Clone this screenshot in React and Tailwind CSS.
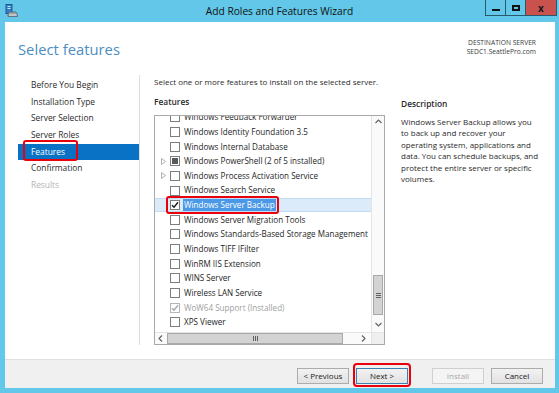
import { useState } from 'react';

const navItems = [
  { label: 'Before You Begin' },
  { label: 'Installation Type' },
  { label: 'Server Selection' },
  { label: 'Server Roles' },
  { label: 'Features', active: true },
  { label: 'Confirmation' },
  { label: 'Results', disabled: true },
];

const features = [
  { label: 'Windows Feedback Forwarder' },
  { label: 'Windows Identity Foundation 3.5' },
  { label: 'Windows Internal Database' },
  { label: 'Windows PowerShell (2 of 5 installed)', state: 'partial', expandable: true },
  { label: 'Windows Process Activation Service', expandable: true },
  { label: 'Windows Search Service' },
  { label: 'Windows Server Backup', state: 'checked', selected: true },
  { label: 'Windows Server Migration Tools' },
  { label: 'Windows Standards-Based Storage Management' },
  { label: 'Windows TIFF IFilter' },
  { label: 'WinRM IIS Extension' },
  { label: 'WINS Server' },
  { label: 'Wireless LAN Service' },
  { label: 'WoW64 Support (Installed)', state: 'checked', disabled: true },
  { label: 'XPS Viewer' },
];

function AppIcon() {
  return (
    <svg width="13" height="13" viewBox="0 0 13 13">
      <rect x="1" y="0.5" width="6" height="9" fill="#2f7fc4" stroke="#1c5a94" />
      <rect x="2.5" y="2" width="3" height="1" fill="#cfe6fa" />
      <rect x="2.5" y="4" width="3" height="1" fill="#cfe6fa" />
      <path d="M4 8 L11 8 L12.5 11 L12.5 12.5 L3 12.5 L3 11 Z" fill="#9aa3ab" stroke="#5d666e" strokeWidth="0.8" />
      <rect x="4" y="10.5" width="7.5" height="1" fill="#e4e7ea" />
    </svg>
  );
}

function Checkbox({ state, disabled }) {
  const border = disabled ? 'border-[#b5b5b5]' : 'border-[#7d7d7d]';
  return (
    <span className={`w-[10px] h-[10px] shrink-0 border ${border} bg-white flex items-center justify-center`}>
      {state === 'checked' && (
        <svg width="8" height="8" viewBox="0 0 8 8">
          <path d="M1 4.2 L3 6.3 L7 1.2" stroke={disabled ? '#a8a8a8' : '#1a1a1a'} strokeWidth="1.4" fill="none" />
        </svg>
      )}
      {state === 'partial' && <span className="w-[6px] h-[6px] bg-[#5a5a5a]" />}
    </span>
  );
}

function FeatureRow({ item }) {
  return (
    <div
      className={`h-[14.65px] flex items-center shrink-0 ${
        item.selected ? 'bg-[#dcebfa] border-y border-[#c3dcf5]' : ''
      }`}
    >
      <span className="w-[15px] pl-[1px] flex items-center justify-center shrink-0">
        {item.expandable && (
          <svg width="5" height="7" viewBox="0 0 5 7">
            <path d="M0.5 0.5 L4.5 3.5 L0.5 6.5 Z" fill="none" stroke="#a5a5a5" strokeWidth="0.9" />
          </svg>
        )}
      </span>
      <span className="relative flex items-center gap-[4px]">
        <Checkbox state={item.state} disabled={item.disabled} />
        <span
          className={`whitespace-nowrap ${
            item.disabled ? 'text-[#a0a0a0]' : 'text-[#1e1e1e]'
          } ${item.selected ? 'bg-[#4a98e6] text-white px-[1px] -ml-[1px]' : ''}`}
        >
          {item.label}
        </span>
        {item.selected && (
          <span className="absolute -left-[4px] -right-[3px] -top-[3px] -bottom-[3px] border-[2.5px] border-[#e8000b] rounded-[3px]" />
        )}
      </span>
    </div>
  );
}

function ArrowBtn({ dir }) {
  const paths = {
    up: 'M1.5 5 L4.5 2 L7.5 5',
    down: 'M1.5 2 L4.5 5 L7.5 2',
    left: 'M5 1.5 L2 4.5 L5 7.5',
    right: 'M2 1.5 L5 4.5 L2 7.5',
  };
  return (
    <svg width="9" height="9" viewBox="0 0 9 9">
      <path d={paths[dir]} fill="none" stroke="#606060" strokeWidth="1.1" />
    </svg>
  );
}

function WizardButton({ children, primary, disabled }) {
  return (
    <button
      type="button"
      disabled={disabled}
      className={`w-[52px] h-[16px] text-[8px] leading-none border bg-gradient-to-b ${
        primary ? 'border-[#3c7fb1]' : disabled ? 'border-[#cfcfcf]' : 'border-[#acacac]'
      } ${disabled ? 'text-[#a8a8a8] from-[#f4f4f4] to-[#f4f4f4]' : 'text-[#1a1a1a] from-[#f2f2f2] to-[#e2e2e2]'}`}
    >
      {children}
    </button>
  );
}

export default function App() {
  const [items] = useState(features);

  return (
    <div className="w-[559px] h-[393px] bg-[#62c7e8] flex flex-col font-['Open_Sans',sans-serif] overflow-hidden">
      {/* title bar */}
      <div className="h-[22px] shrink-0 grid grid-cols-[1fr_auto_1fr] items-start">
        <div className="pl-[5px] pt-[4px]">
          <AppIcon />
        </div>
        <div className="pt-[4px] text-[10.2px] leading-[14px] text-[#111]">Add Roles and Features Wizard</div>
        <div className="flex justify-end pr-[2px]">
          <div className="flex border border-t-0 border-[#27596f] h-[16px]">
            <div className="w-[20px] flex items-end justify-center pb-[4px] border-r border-[#27596f]">
              <span className="w-[8px] h-[2px] bg-[#111]" />
            </div>
            <div className="w-[20px] flex items-center justify-center border-r border-[#27596f]">
              <span className="w-[8px] h-[6px] border-2 border-[#111]" />
            </div>
            <div className="w-[30px] bg-[#c9524f] flex items-center justify-center text-[#1a1a1a] text-[10px] font-bold leading-none">
              x
            </div>
          </div>
        </div>
      </div>

      {/* body */}
      <div className="flex-1 mr-[4px] ml-[5px] bg-white flex flex-col">
        <div className="h-[53px] shrink-0 flex justify-between items-start">
          <div className="pl-[13px] pt-[17px] text-[14.8px] leading-[20px] text-[#4c8ec2]">Select features</div>
          <div className="pr-[19px] pt-[16px] text-right text-[6.7px] leading-[9px] text-[#3a3a3a]">
            <div>DESTINATION SERVER</div>
            <div>SEDC1.SeattlePro.com</div>
          </div>
        </div>

        <div className="flex-1 flex min-h-0">
          {/* nav */}
          <div className="w-[134px] shrink-0 pl-[13px] pt-[2px]">
            {navItems.map((n) => (
              <div
                key={n.label}
                className={`relative h-[16.7px] pl-[13px] flex items-center text-[8.4px] ${
                  n.active ? 'bg-[#0a72c4] text-white' : n.disabled ? 'text-[#b4b4b4]' : 'text-[#2a2a2a]'
                }`}
              >
                {n.label}
                {n.active && (
                  <span className="absolute left-[5px] w-[55px] -top-[4px] h-[21px] border-[2.5px] border-[#e8000b] rounded-[3px]" />
                )}
              </div>
            ))}
          </div>

          <div className="w-px h-[270px] bg-[#dedede] shrink-0" />

          {/* content */}
          <div className="flex-1 pl-[14px] pt-[1px] flex flex-col">
            <div className="text-[8px] leading-[12px] text-[#2a2a2a]">
              Select one or more features to install on the selected server.
            </div>
            <div className="flex gap-[16px] mt-[8px]">
              <div className="w-[231px] shrink-0 flex flex-col">
                <div className="text-[8.4px] leading-[12px] font-semibold text-[#2a2a2a] mb-[7px]">Features</div>
                <div className="w-[231px] h-[230px] border border-[#a9a9a9] flex flex-col text-[8.1px]">
                  <div className="flex-1 flex min-h-0">
                    <div className="flex-1 overflow-hidden">
                      <div className="-mt-[6px] flex flex-col">
                        {items.map((it) => (
                          <FeatureRow key={it.label} item={it} />
                        ))}
                      </div>
                    </div>
                    <div className="w-[13px] shrink-0 border-l border-[#e4e4e4] bg-[#fafafa] flex flex-col">
                      <div className="h-[13px] flex items-center justify-center">
                        <ArrowBtn dir="up" />
                      </div>
                      <div className="flex-1 flex flex-col justify-end pb-[4px] px-px">
                        <div className="h-[40px] bg-[#d3d3d3] border border-[#a8a8a8] flex flex-col items-center justify-center gap-px">
                          <span className="w-[5px] h-px bg-[#606060]" />
                          <span className="w-[5px] h-px bg-[#606060]" />
                          <span className="w-[5px] h-px bg-[#606060]" />
                        </div>
                      </div>
                      <div className="h-[13px] flex items-center justify-center">
                        <ArrowBtn dir="down" />
                      </div>
                    </div>
                  </div>
                  <div className="h-[12px] shrink-0 flex border-t border-[#e4e4e4] bg-[#fafafa]">
                    <div className="w-[12px] flex items-center justify-center">
                      <ArrowBtn dir="left" />
                    </div>
                    <div className="w-[176px] bg-[#d3d3d3] border border-[#a8a8a8] flex items-center justify-center gap-px">
                      <span className="w-px h-[5px] bg-[#606060]" />
                      <span className="w-px h-[5px] bg-[#606060]" />
                      <span className="w-px h-[5px] bg-[#606060]" />
                    </div>
                    <div className="flex-1" />
                    <div className="w-[14px] flex items-center justify-center">
                      <ArrowBtn dir="right" />
                    </div>
                    <div className="w-[13px] bg-[#efefef] border-l border-[#e4e4e4]" />
                  </div>
                </div>
              </div>

              <div className="w-[140px] pt-[2px]">
                <div className="text-[8.4px] leading-[12px] font-semibold text-[#2a2a2a] mb-[6px]">Description</div>
                <p className="text-[8px] leading-[11.4px] text-[#2a2a2a]">
                  Windows Server Backup allows you to back up and recover your operating system, applications and
                  data. You can schedule backups, and protect the entire server or specific volumes.
                </p>
              </div>
            </div>
          </div>
        </div>

        {/* footer */}
        <div className="h-[29px] shrink-0 bg-[#f0f0f0] border-t border-[#dfdfdf] flex justify-end items-start pt-[8px] pr-[12px]">
          <div className="flex">
            <WizardButton>&lt; Previous</WizardButton>
          </div>
          <div className="relative flex ml-[7px]">
            <WizardButton primary>Next &gt;</WizardButton>
            <span className="absolute -left-[3px] -right-[3px] -top-[5px] -bottom-[3px] border-[2.5px] border-[#e8000b] rounded-[4px]" />
          </div>
          <div className="flex ml-[24px]">
            <WizardButton disabled>Install</WizardButton>
          </div>
          <div className="flex ml-[7px]">
            <WizardButton>Cancel</WizardButton>
          </div>
        </div>
      </div>
      <div className="h-[5px] shrink-0" />
    </div>
  );
}
